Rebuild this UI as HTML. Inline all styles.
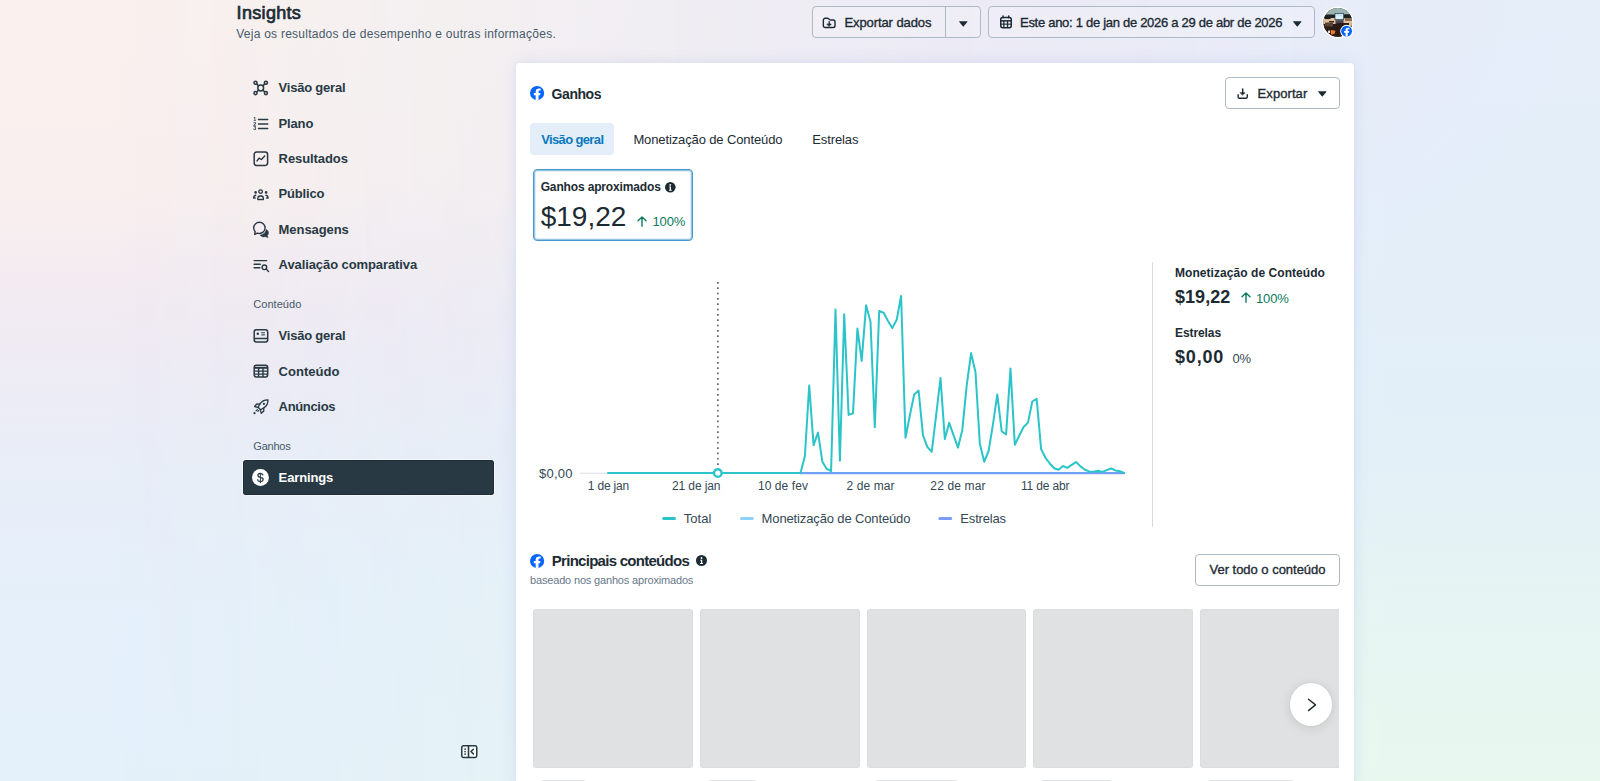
<!DOCTYPE html>
<html lang="pt-BR">
<head>
<meta charset="utf-8">
<title>Insights</title>
<style>
*{box-sizing:border-box;margin:0;padding:0}
html,body{width:1600px;height:781px;overflow:hidden}
body{position:relative;font-family:"Liberation Sans",sans-serif;color:#1C2B33;background:#EEF0F7}
.bg,.bg2{position:absolute;left:0;top:0;width:1600px;height:781px}
.bg{background:linear-gradient(to bottom,#FAF1EE 0%,#F9EFEE 24%,#F1EAF2 40%,#E9EDF7 58%,#E5EFFA 75%,#E4F0FA 100%)}
.bg2{background:linear-gradient(to bottom,#E5EEF9 0%,#E3EEF9 40%,#E3F0F7 60%,#E6F5F2 80%,#E8F8EF 100%);-webkit-mask-image:linear-gradient(to right,transparent 6%,#000 88%);mask-image:linear-gradient(to right,transparent 6%,#000 88%)}
.bg3{position:absolute;left:0;top:0;width:1600px;height:781px;background:radial-gradient(ellipse 560px 330px at 1020px 0,rgba(236,222,244,.30),rgba(236,222,244,0) 100%)}
.t{position:absolute;white-space:nowrap}
.m{-webkit-text-stroke:.35px currentColor}
.m2{-webkit-text-stroke:.7px currentColor}
.abs{position:absolute}
.btn{position:absolute;border:1px solid #AEBAC3;border-radius:4px}
.panel{position:absolute;left:515.700px;top:63.300px;width:838.300px;height:730px;background:#fff;border-radius:4px 4px 0 0;box-shadow:0 0 16px rgba(70,110,210,.12),0 0 3px rgba(70,110,210,.06)}
.sk{position:absolute;top:609px;height:159px;width:159.5px;background:#E0E1E3;border-radius:3px;box-shadow:inset 0 0 0 1px rgba(0,0,0,.02)}
svg{position:absolute;overflow:visible}
</style>
</head>
<body>
<div class="bg"></div><div class="bg2"></div><div class="bg3"></div>

<!-- header buttons -->
<div class="btn" style="left:811.5px;top:6px;width:169px;height:32px;background:rgba(255,255,255,.18)"></div>
<div class="abs" style="left:945px;top:6px;width:1px;height:32px;background:#AEBAC3"></div>
<div class="btn" style="left:988px;top:6px;width:326.5px;height:32px;background:rgba(255,255,255,.18)"></div>

<!-- folder icon -->
<svg style="left:822.200px;top:16.600px" width="14" height="12" viewBox="0 0 14 12" fill="none" stroke="#1C2B33" stroke-width="1.400" stroke-linejoin="round" stroke-linecap="round"><path d="M1.350 3.200c0-1.050.75-1.900 1.800-1.900h2.200c.5 0 .9.150 1.300.5l.9.750c.3.250.7.400 1.100.400h2.550c1 0 1.800.8 1.800 1.800v4c0 1-.8 1.800-1.800 1.800H3.150c-1 0-1.800-.8-1.800-1.800z"/><path d="M7.200 4.600v2.600" stroke-width="1.300"/><path d="M5.100 7h4.200L7.200 9.200z" fill="#1C2B33" stroke-width=".7"/></svg>
<!-- carets -->
<svg style="left:958.700px;top:20.500px" width="8.600" height="5.730" viewBox="0 0 9 6"><path d="M.6.300h7.800c.4 0 .6.400.3.700L5 5.500c-.3.300-.7.300-1 0L.3 1C0 .7.200.3.600.300z" fill="#1C2B33"/></svg>
<svg style="left:1292.700px;top:20.500px" width="8.600" height="5.730" viewBox="0 0 9 6"><path d="M.6.300h7.800c.4 0 .6.400.3.700L5 5.500c-.3.300-.7.300-1 0L.3 1C0 .7.200.3.600.300z" fill="#1C2B33"/></svg>
<!-- calendar icon -->
<svg style="left:999.850px;top:15.400px" width="12" height="13.400" viewBox="0 0 12 13.400" fill="none" stroke="#1C2B33"><rect x=".75" y="2.450" width="10.500" height="10.200" rx="1.800" stroke-width="1.500"/><path d="M.75 5.850h10.500" stroke-width="1.500"/><path d="M.75 9.150h10.500" stroke-width="1.100"/><path d="M3.850 5.700v7M7.550 5.700v7" stroke-width="1.300"/><path d="M3 1.100v1.600M8.700 1.100v1.600" stroke-width="1.500" stroke-linecap="round"/></svg>

<!-- avatar -->
<svg style="left:1321px;top:6px" width="34" height="34" viewBox="0 0 34 34">
  <defs><clipPath id="av"><circle cx="16.800" cy="16.400" r="14.300"/></clipPath></defs>
  <circle cx="16.800" cy="16.400" r="15.800" fill="#fff" fill-opacity=".92"/>
  <g clip-path="url(#av)">
    <rect x="0" y="0" width="34" height="34" fill="#2A1B16"/>
    <rect x="0" y="0" width="34" height="9" fill="#9CB4B1"/>
    <rect x="2" y="8.500" width="30" height="4" fill="#1F2422"/>
    <rect x="2" y="12" width="30" height="6" fill="#E2C29C"/>
    <rect x="3.500" y="11.500" width="6" height="1.600" fill="#1A1A1A"/>
    <rect x="8" y="15" width="5" height="1.500" fill="#3A2A22"/>
    <rect x="13.700" y="7" width="9.200" height="7.200" fill="#2B2F3A"/>
    <rect x="14.300" y="7.700" width="8" height="5.600" fill="#C3E6F2"/>
    <rect x="15" y="10.500" width="6.500" height="2" fill="#E8F6FA"/>
    <rect x="14.500" y="14.200" width="8" height="4" fill="#4B4452"/>
    <rect x="23.500" y="8.500" width="8" height="4" fill="#20201E"/>
    <rect x="24" y="13" width="8" height="2" fill="#8A6C52"/>
    <path d="M2 18h12l4-1h14v17H2z" fill="#2A1B16"/>
    <rect x="4" y="16.500" width="8" height="4" fill="#5A4436"/>
    <rect x="28" y="17" width="5" height="3" fill="#D8B892"/>
    <path d="M10 24l4.500.8-1 3.200-3.500.5z" fill="#F07A2C"/>
    <rect x="7" y="24.500" width="2.200" height="2.500" fill="#E8D8C8"/>
  </g>
  <circle cx="25.600" cy="25.200" r="6.400" fill="#fff"/>
  <g transform="translate(20.150,19.750) scale(.7786)"><circle cx="7" cy="7" r="7" fill="#0866FF"/><path d="M9.9 9.1l.35-2.2H8.4V5.6c0-.65.3-1.2 1.25-1.2h.95V2.7s-.9-.15-1.700-.15C7 2.550 5.600 3.600 5.600 5.400V6.900H3.800v2.200h1.800v4.800a7 7 0 0 0 2.800 0V9.100z" fill="#fff"/></g>
</svg>

<!-- sidebar active -->
<div class="abs" style="left:243px;top:460px;width:251.200px;height:35.300px;background:#283943;border-radius:3.500px;box-shadow:inset 0 0 0 1px #1E2E38,0 0 0 1px rgba(255,255,255,.55)"></div>

<!--ICONS-START-->
<!-- sidebar icons -->
<svg style="left:252.800px;top:79.900px" width="16" height="16" viewBox="0 0 16 16" fill="none" stroke="#283943" stroke-width="1.500"><circle cx="7.700" cy="8" r="2.900"/><circle cx="2.500" cy="2.800" r="1.550"/><circle cx="12.900" cy="2.800" r="1.550"/><circle cx="2.500" cy="13.100" r="1.550"/><circle cx="12.900" cy="13.100" r="1.550"/><path d="M3.600 3.900l2 2M11.800 3.900l-2 2M3.600 12l2-2M11.800 12l-2-2"/></svg>
<svg style="left:252.800px;top:115.650px;opacity:.999" width="16" height="16" viewBox="0 0 16 16" fill="none" stroke="#283943" stroke-width="1.500" stroke-linecap="round"><path d="M5.500 3.500h9.200M5.500 8.100h9.200M5.500 12.500h9.200"/><g fill="#283943" stroke="none" font-family="Liberation Sans, sans-serif" font-weight="700" font-size="5.400"><text x=".2" y="5.300">1</text><text x=".2" y="9.900">2</text><text x=".2" y="14.400">3</text></g></svg>
<svg style="left:252.800px;top:150.900px" width="16" height="16" viewBox="0 0 16 16" fill="none" stroke="#283943" stroke-width="1.500" stroke-linejoin="round" stroke-linecap="round"><rect x="1.200" y="1" width="13.400" height="13.400" rx="2.300"/><path d="M4 9.900l2.100-2.700 2.300 1.300 3.300-3.400" stroke-width="1.400"/></svg>
<svg style="left:252.800px;top:186.800px" width="16" height="16" viewBox="0 0 16 16" fill="none" stroke="#283943" stroke-width="1.300" stroke-linecap="round" stroke-linejoin="round"><circle cx="7.600" cy="4.600" r="1.800"/><path d="M4.800 12.500v-1.200c0-1.300 1-2.300 2.300-2.300h1c1.300 0 2.300 1 2.300 2.300v1.200z"/><circle cx="2.600" cy="5.400" r="1.300" fill="#283943" stroke="none"/><circle cx="13.100" cy="5.400" r="1.300" fill="#283943" stroke="none"/><path d="M2.700 8.300c-1.300.2-2 1-2 2.100v.5h1.400M13 8.300c1.300.2 2 1 2 2.100v.5h-1.400" stroke-width="1.500"/></svg>
<svg style="left:252.800px;top:221.900px" width="16" height="16" viewBox="0 0 16 16" fill="none" stroke="#283943" stroke-width="1.400" stroke-linejoin="round"><path d="M6.400.3C3.200.3.700 2.800.7 5.900c0 1.500.6 2.800 1.500 3.800l-.5 2.700 2.600-1.300c.7.300 1.400.4 2.100.4 3.200 0 5.700-2.500 5.700-5.600S9.600.3 6.400.3z"/><path d="M13.100 7.400c1.300.6 2.400 1.700 2.400 3.300 0 1-.4 1.900-1.100 2.600l.4 2.400-2.300-1.100c-.5.200-1.100.3-1.700.3-1.700 0-3.100-.8-3.700-1.900 3.200-.3 5.700-2.300 6-5.600z" fill="#283943" stroke-width=".5"/></svg>
<svg style="left:252.800px;top:257.900px" width="16" height="16" viewBox="0 0 16 16" fill="none" stroke="#283943" stroke-width="1.400" stroke-linecap="round"><path d="M1.100 2.600h12.600M1.100 6.300h6.200M1.100 9.800h5.800"/><circle cx="11.400" cy="9.300" r="2.300"/><path d="M13.200 11.100l2.300 2.300"/></svg>
<svg style="left:252.800px;top:328px" width="16" height="16" viewBox="0 0 16 16" fill="none" stroke="#283943" stroke-width="1.500" stroke-linejoin="round"><rect x="1.200" y="1.800" width="13.500" height="12.200" rx="2.200"/><path d="M1.200 10.500h13.500"/><circle cx="4.800" cy="5.800" r="1.200" fill="#283943" stroke="none"/><path d="M8.200 4.800h3.700M8.200 6.900h3.700" stroke-width="1"/></svg>
<svg style="left:252.800px;top:363.200px" width="16" height="16" viewBox="0 0 16 16" fill="none" stroke="#283943" stroke-width="1.500" stroke-linejoin="round"><rect x="1.200" y="2.300" width="13.500" height="11.700" rx="2.200"/><path d="M1.200 4.800h13.500" stroke-width="2"/><path d="M1.200 8.100h13.500M1.200 11.100h13.500M5.600 4.800v9.200M10 4.800v9.200" stroke-width="1.400"/></svg>
<svg style="left:252.800px;top:399px" width="16" height="16" viewBox="0 0 16 16" fill="none" stroke="#283943" stroke-width="1.300" stroke-linejoin="round" stroke-linecap="round"><path d="M15 .8c-3.600-.1-6.300 1.300-8.100 4.100L5.100 8.300l2.400 2.400 3.400-1.800C13.700 7.100 15.100 4.400 15 .8z"/><path d="M6.800 5.100L3.800 5 1.600 7.500l3.200.9M10.700 9l.1 3-2.500 2.200-.9-3.200"/><circle cx="10.900" cy="4.900" r="1.100" fill="#283943" stroke="none"/><circle cx="1.500" cy="14.200" r="1.100" fill="#283943" stroke="none"/><path d="M4.400 10.300L3 11.800M5.700 11.500l-.9.900" stroke-width="1.100"/></svg>
<svg style="left:252.050px;top:469.150px;opacity:.999" width="16.900" height="16.900" viewBox="0 0 16.900 16.900"><circle cx="8.450" cy="8.450" r="8.450" fill="#fff"/><text x="8.450" y="12.700" text-anchor="middle" font-family="Liberation Sans, sans-serif" font-weight="400" font-size="12" fill="#283943" stroke="#283943" stroke-width=".3">$</text></svg>
<!--ICONS-END-->

<!-- main panel -->
<div class="panel"></div>

<!-- fb icons -->
<svg style="left:529.800px;top:86.300px" width="14.200" height="14.200" viewBox="0 0 14 14"><circle cx="7" cy="7" r="7" fill="#0866FF"/><path d="M9.9 9.1l.35-2.2H8.4V5.6c0-.65.3-1.2 1.25-1.2h.95V2.7s-.9-.15-1.700-.15C7 2.550 5.600 3.600 5.600 5.400V6.900H3.800v2.200h1.800v4.800a7 7 0 0 0 2.800 0V9.100z" fill="#fff"/></svg>
<svg style="left:529.800px;top:553.800px" width="14.200" height="14.200" viewBox="0 0 14 14"><circle cx="7" cy="7" r="7" fill="#0866FF"/><path d="M9.9 9.1l.35-2.2H8.4V5.6c0-.65.3-1.2 1.25-1.2h.95V2.7s-.9-.15-1.700-.15C7 2.550 5.600 3.600 5.600 5.400V6.900H3.800v2.200h1.800v4.800a7 7 0 0 0 2.800 0V9.100z" fill="#fff"/></svg>

<!-- export button -->
<div class="btn" style="left:1225px;top:77px;width:114.500px;height:32.300px;background:#fff"></div>
<svg style="left:1237.450px;top:87.800px" width="11.400" height="11.400" viewBox="0 0 11.400 11.400" fill="none" stroke="#1C2B33" stroke-width="1.400" stroke-linecap="round" stroke-linejoin="round"><path d="M5.700 1v3.800" stroke-width="1.500"/><path d="M3.300 4.700h4.800L5.700 6.900z" fill="#1C2B33" stroke-width=".6"/><path d="M1.100 6.800v2c0 .85.650 1.500 1.500 1.500h6.200c.85 0 1.500-.65 1.500-1.500v-2"/></svg>
<svg style="left:1317.700px;top:91.200px" width="8.600" height="5.730" viewBox="0 0 9 6"><path d="M.6.300h7.800c.4 0 .6.400.3.700L5 5.500c-.3.300-.7.300-1 0L.3 1C0 .7.200.3.600.300z" fill="#1C2B33"/></svg>

<!-- tabs -->
<div class="abs" style="left:529.700px;top:123.300px;width:84.200px;height:31.600px;background:#E3EEF8;border-radius:4px"></div>

<!-- metric card -->
<div class="abs" style="left:533px;top:169px;width:160px;height:71.500px;border:1px solid #4697CE;border-radius:4px;background:#fff;box-shadow:inset 0 0 0 1px rgba(70,151,206,.48),inset 0 0 0 2px rgba(70,151,206,.16)"></div>
<!-- info icon -->
<svg style="left:664.500px;top:182px" width="10.600" height="10.600" viewBox="0 0 12 12"><circle cx="6" cy="6" r="6" fill="#1C2B33"/><circle cx="6" cy="3.300" r="1" fill="#fff"/><path d="M4.700 5.200h2.100v3.600h.8v1H4.500v-1h.9V6.200h-.7z" fill="#fff"/></svg>
<svg style="left:696px;top:555.200px" width="11" height="11" viewBox="0 0 12 12"><circle cx="6" cy="6" r="6" fill="#1C2B33"/><circle cx="6" cy="3.300" r="1" fill="#fff"/><path d="M4.700 5.200h2.100v3.600h.8v1H4.500v-1h.9V6.200h-.7z" fill="#fff"/></svg>
<!-- up arrows -->
<svg style="left:637px;top:215.500px" width="10" height="11" viewBox="0 0 10 11" fill="none" stroke="#0B7A5C" stroke-width="1.400" stroke-linecap="round" stroke-linejoin="round"><path d="M5 10.200V1M1 4.800L5 .9l4 3.900"/></svg>
<svg style="left:1240.500px;top:292.300px" width="10" height="11" viewBox="0 0 10 11" fill="none" stroke="#0B7A5C" stroke-width="1.400" stroke-linecap="round" stroke-linejoin="round"><path d="M5 10.200V1M1 4.800L5 .9l4 3.900"/></svg>

<!-- chart -->
<svg style="left:0;top:0" width="1600" height="781" viewBox="0 0 1600 781" fill="none">
  <line x1="580" y1="473.200" x2="1124" y2="473.200" stroke="#DADDE1" stroke-width="1"/>
  <line x1="717.900" y1="282" x2="717.900" y2="468" stroke="#55595E" stroke-width="1.600" stroke-dasharray="1.700 3.630"/>
  <line x1="608" y1="473" x2="1124.200" y2="473" stroke="#2BC4C9" stroke-width="2"/>
  <line x1="800" y1="473.300" x2="1124.200" y2="473.300" stroke="#7C9CFA" stroke-width="2"/>
  <polyline points="608.0,473.0 800.5,473.0 804.9,456.1 809.2,385.5 813.6,445.1 818.0,432.6 822.4,461.8 826.7,468.9 831.1,471.0 835.5,309.4 839.9,460.7 844.2,314.3 848.6,414.9 853.0,413.4 857.4,328.4 861.7,360.9 866.1,305.3 870.5,321.7 874.8,427.2 879.2,311.0 883.6,312.8 888.0,321.0 892.3,328.1 896.7,319.7 901.1,295.9 905.5,437.7 909.8,415.7 914.2,394.4 918.6,390.6 923.0,435.4 927.3,446.9 931.7,451.8 936.1,415.7 940.5,378.0 944.8,438.9 949.2,422.8 953.6,435.3 958.0,447.6 962.3,429.9 966.7,385.7 971.1,353.1 975.5,372.3 979.8,443.4 984.2,461.8 988.6,451.0 993.0,424.1 997.3,394.4 1001.7,431.2 1006.1,434.5 1010.5,368.4 1014.8,444.7 1019.2,435.7 1023.6,427.0 1028.0,422.6 1032.3,401.5 1036.7,398.8 1041.1,449.1 1045.5,457.8 1049.8,463.5 1054.2,468.3 1058.6,469.7 1063.0,466.0 1067.3,467.9 1071.7,464.9 1076.1,462.0 1080.5,466.4 1084.8,469.7 1089.2,471.4 1093.6,471.8 1098.0,470.8 1102.3,472.0 1106.7,470.1 1111.1,468.5 1115.5,470.4 1119.8,471.2 1124.2,473.0" stroke="#2BC4C9" stroke-width="2" stroke-linejoin="round" stroke-linecap="round"/>
  <circle cx="717.800" cy="473" r="3.800" fill="#fff" stroke="#2BC4C9" stroke-width="2.400"/>
  <line x1="1152.500" y1="262" x2="1152.500" y2="527" stroke="#D5DAE0" stroke-width="1"/>
  <!-- legend -->
  <line x1="663.700" y1="518.400" x2="674.500" y2="518.400" stroke="#2BC4C9" stroke-width="3" stroke-linecap="round"/>
  <line x1="741.500" y1="518.400" x2="752.300" y2="518.400" stroke="#8DD3FF" stroke-width="3" stroke-linecap="round"/>
  <line x1="939.900" y1="518.400" x2="950.700" y2="518.400" stroke="#7C9CFA" stroke-width="3" stroke-linecap="round"/>
</svg>

<!-- bottom section -->
<div class="btn" style="left:1195px;top:554px;width:144.500px;height:31.500px;background:#fff"></div>
<div class="abs" style="left:529px;top:600px;width:810.300px;height:190px;overflow:hidden">
  <div class="sk" style="left:4.250px;top:9px"></div>
  <div class="sk" style="left:171px;top:9px"></div>
  <div class="sk" style="left:337.600px;top:9px"></div>
  <div class="sk" style="left:504.300px;top:9px"></div>
  <div class="sk" style="left:671px;top:9px"></div>
  <div class="abs" style="left:12.250px;top:179.700px;width:45px;height:12px;background:#E0E2E4;border-radius:3px"></div>
  <div class="abs" style="left:179px;top:179.700px;width:49px;height:12px;background:#E0E2E4;border-radius:3px"></div>
  <div class="abs" style="left:346px;top:179.700px;width:83px;height:12px;background:#E0E2E4;border-radius:3px"></div>
  <div class="abs" style="left:512px;top:179.700px;width:71px;height:12px;background:#E0E2E4;border-radius:3px"></div>
  <div class="abs" style="left:678.500px;top:179.700px;width:86.500px;height:12px;background:#E0E2E4;border-radius:3px"></div>
</div>
<div class="abs" style="left:1290px;top:683.300px;width:42.400px;height:42.400px;border-radius:50%;background:#fff;box-shadow:0 2px 12px rgba(0,0,0,.10),0 0 2px rgba(0,0,0,.10)"></div>
<svg style="left:1307px;top:697.500px" width="10" height="14" viewBox="0 0 10 14" fill="none" stroke="#1C2B33" stroke-width="1.400" stroke-linecap="round" stroke-linejoin="round"><path d="M1.500 1.200l7 5.700-7 5.700"/></svg>

<!-- collapse icon -->
<svg style="left:461px;top:745px" width="16.500" height="13.200" viewBox="0 0 16.500 13.200" fill="none" stroke="#283943" stroke-width="1.500"><rect x=".75" y=".75" width="15" height="11.700" rx="1.700" fill="rgba(255,255,255,.75)"/><path d="M7.500.75v11.700" stroke-width="1.600"/><path d="M12.300 4.300L10 6.600l2.300 2.300" stroke-linecap="round" stroke-linejoin="round"/><g fill="#283943" stroke="none"><circle cx="4.100" cy="4.100" r=".85"/><circle cx="4.100" cy="6.600" r=".85"/><circle cx="4.100" cy="9.100" r=".85"/></g></svg>

<div class="t m2" style="left:236.60px;top:4.16px;font-size:18px;line-height:18px;color:#1C2B33;letter-spacing:0.319px;">Insights</div>
<div class="t" style="left:236.20px;top:28.14px;font-size:12px;line-height:12px;color:#465A69;letter-spacing:0.252px;">Veja os resultados de desempenho e outras informações.</div>
<div class="t m" style="left:844.40px;top:15.70px;font-size:13px;line-height:13px;color:#1C2B33;letter-spacing:-0.084px;">Exportar dados</div>
<div class="t m" style="left:1020.00px;top:15.70px;font-size:13px;line-height:13px;color:#1C2B33;letter-spacing:-0.287px;">Este ano: 1 de jan de 2026 a 29 de abr de 2026</div>
<div class="t" style="left:278.60px;top:81.20px;font-size:13px;line-height:13px;color:#283943;font-weight:700;letter-spacing:-0.222px;">Visão geral</div>
<div class="t" style="left:278.60px;top:116.60px;font-size:13px;line-height:13px;color:#283943;font-weight:700;letter-spacing:-0.161px;">Plano</div>
<div class="t" style="left:278.60px;top:152.00px;font-size:13px;line-height:13px;color:#283943;font-weight:700;letter-spacing:-0.088px;">Resultados</div>
<div class="t" style="left:278.60px;top:187.20px;font-size:13px;line-height:13px;color:#283943;font-weight:700;letter-spacing:-0.179px;">Público</div>
<div class="t" style="left:278.60px;top:222.80px;font-size:13px;line-height:13px;color:#283943;font-weight:700;letter-spacing:-0.068px;">Mensagens</div>
<div class="t" style="left:278.60px;top:258.10px;font-size:13px;line-height:13px;color:#283943;font-weight:700;letter-spacing:-0.092px;">Avaliação comparativa</div>
<div class="t" style="left:253.30px;top:298.99px;font-size:11px;line-height:11px;color:#465A69;letter-spacing:0.035px;">Conteúdo</div>
<div class="t" style="left:278.60px;top:329.20px;font-size:13px;line-height:13px;color:#283943;font-weight:700;letter-spacing:-0.222px;">Visão geral</div>
<div class="t" style="left:278.60px;top:364.70px;font-size:13px;line-height:13px;color:#283943;font-weight:700;letter-spacing:0.018px;">Conteúdo</div>
<div class="t" style="left:278.60px;top:400.20px;font-size:13px;line-height:13px;color:#283943;font-weight:700;letter-spacing:-0.333px;">Anúncios</div>
<div class="t" style="left:253.30px;top:440.99px;font-size:11px;line-height:11px;color:#465A69;letter-spacing:-0.222px;">Ganhos</div>
<div class="t" style="left:278.60px;top:470.90px;font-size:13px;line-height:13px;color:#FFFFFF;font-weight:700;letter-spacing:-0.128px;">Earnings</div>
<div class="t" style="left:551.60px;top:86.55px;font-size:14px;line-height:14px;color:#1C2B33;font-weight:700;letter-spacing:-0.438px;">Ganhos</div>
<div class="t m" style="left:1257.60px;top:87.00px;font-size:13px;line-height:13px;color:#1C2B33;letter-spacing:0.07px;">Exportar</div>
<div class="t" style="left:541.20px;top:132.80px;font-size:13px;line-height:13px;color:#0A78BE;font-weight:700;letter-spacing:-0.631px;">Visão geral</div>
<div class="t" style="left:633.40px;top:132.80px;font-size:13px;line-height:13px;color:#1C2B33;letter-spacing:-0.121px;">Monetização de Conteúdo</div>
<div class="t" style="left:812.30px;top:132.80px;font-size:13px;line-height:13px;color:#1C2B33;letter-spacing:-0.121px;">Estrelas</div>
<div class="t" style="left:540.70px;top:181.44px;font-size:12px;line-height:12px;color:#1C2B33;font-weight:700;letter-spacing:-0.15px;">Ganhos aproximados</div>
<div class="t" style="left:540.70px;top:202.90px;font-size:28px;line-height:28px;color:#1C2B33;letter-spacing:0.01px;">$19,22</div>
<div class="t" style="left:652.50px;top:215.20px;font-size:13px;line-height:13px;color:#0B7A5C;letter-spacing:-0.137px;">100%</div>
<div class="t" style="left:1175.00px;top:267.04px;font-size:12px;line-height:12px;color:#1C2B33;font-weight:700;letter-spacing:0.058px;">Monetização de Conteúdo</div>
<div class="t" style="left:1175.00px;top:287.76px;font-size:18px;line-height:18px;color:#1C2B33;font-weight:700;letter-spacing:0.04px;">$19,22</div>
<div class="t" style="left:1256.00px;top:292.00px;font-size:13px;line-height:13px;color:#0B7A5C;letter-spacing:-0.137px;">100%</div>
<div class="t" style="left:1175.00px;top:327.04px;font-size:12px;line-height:12px;color:#1C2B33;font-weight:700;letter-spacing:-0.088px;">Estrelas</div>
<div class="t" style="left:1175.00px;top:347.76px;font-size:18px;line-height:18px;color:#1C2B33;font-weight:700;letter-spacing:0.831px;">$0,00</div>
<div class="t" style="left:1232.50px;top:352.00px;font-size:13px;line-height:13px;color:#344854;letter-spacing:-0.148px;">0%</div>
<div class="t" style="left:539.00px;top:466.90px;font-size:13px;line-height:13px;color:#344854;letter-spacing:0.241px;">$0,00</div>
<div class="t" style="left:587.80px;top:480.14px;font-size:12px;line-height:12px;color:#344854;letter-spacing:-0.188px;">1 de jan</div>
<div class="t" style="left:672.00px;top:480.14px;font-size:12px;line-height:12px;color:#344854;letter-spacing:-0.11px;">21 de jan</div>
<div class="t" style="left:757.90px;top:480.14px;font-size:12px;line-height:12px;color:#344854;letter-spacing:0.092px;">10 de fev</div>
<div class="t" style="left:846.50px;top:480.14px;font-size:12px;line-height:12px;color:#344854;letter-spacing:0.105px;">2 de mar</div>
<div class="t" style="left:930.35px;top:480.14px;font-size:12px;line-height:12px;color:#344854;letter-spacing:0.141px;">22 de mar</div>
<div class="t" style="left:1020.95px;top:480.14px;font-size:12px;line-height:12px;color:#344854;letter-spacing:-0.148px;">11 de abr</div>
<div class="t" style="left:683.80px;top:511.90px;font-size:13px;line-height:13px;color:#344854;letter-spacing:0.046px;">Total</div>
<div class="t" style="left:761.60px;top:511.90px;font-size:13px;line-height:13px;color:#344854;letter-spacing:-0.134px;">Monetização de Conteúdo</div>
<div class="t" style="left:960.30px;top:511.90px;font-size:13px;line-height:13px;color:#344854;letter-spacing:-0.171px;">Estrelas</div>
<div class="t" style="left:551.80px;top:552.70px;font-size:15px;line-height:15px;color:#1C2B33;font-weight:700;letter-spacing:-0.725px;">Principais conteúdos</div>
<div class="t" style="left:530.00px;top:574.69px;font-size:11px;line-height:11px;color:#67788A;letter-spacing:-0.166px;">baseado nos ganhos aproximados</div>
<div class="t m" style="left:1209.50px;top:563.40px;font-size:13px;line-height:13px;color:#1C2B33;letter-spacing:-0.02px;">Ver todo o conteúdo</div>
</body>
</html>
